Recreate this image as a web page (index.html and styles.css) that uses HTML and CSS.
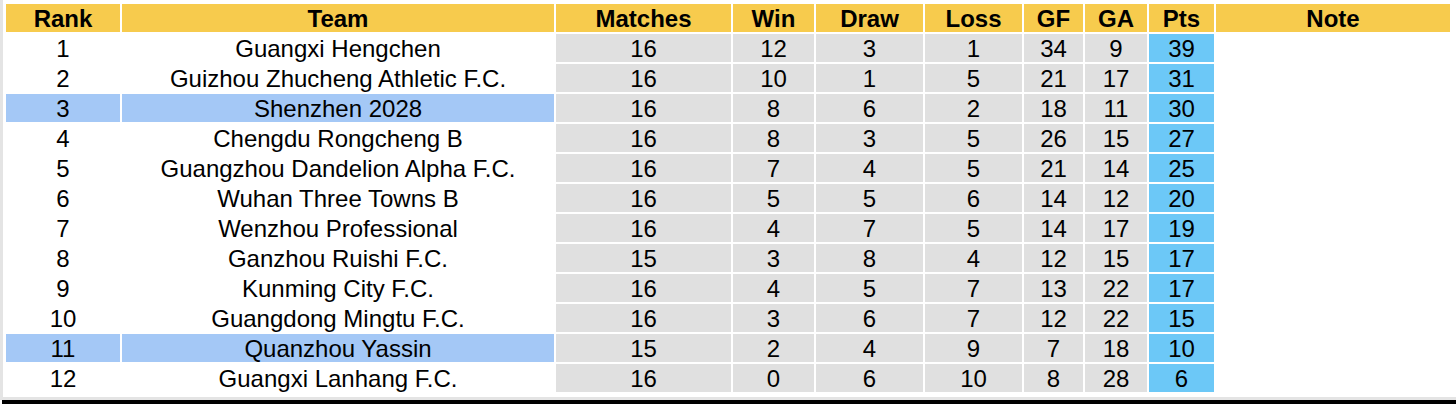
FILE: index.html
```html
<!DOCTYPE html>
<html>
<head>
<meta charset="utf-8">
<link rel="stylesheet" href="styles.css">
</head>
<body>
<div class="frame">
<table class="standings">
<thead>
<tr>
<th class="c-rank">Rank</th><th class="c-team">Team</th><th class="c-m">Matches</th><th class="c-w">Win</th><th class="c-d">Draw</th><th class="c-l">Loss</th><th class="c-gf">GF</th><th class="c-ga">GA</th><th class="c-pts">Pts</th><th class="c-note">Note</th>
</tr>
</thead>
<tbody>
<tr><td>1</td><td>Guangxi Hengchen</td><td class="g">16</td><td class="g">12</td><td class="g">3</td><td class="g">1</td><td class="g">34</td><td class="g">9</td><td class="p">39</td><td></td></tr>
<tr><td>2</td><td>Guizhou Zhucheng Athletic F.C.</td><td class="g">16</td><td class="g">10</td><td class="g">1</td><td class="g">5</td><td class="g">21</td><td class="g">17</td><td class="p">31</td><td></td></tr>
<tr class="hl"><td>3</td><td>Shenzhen 2028</td><td class="g">16</td><td class="g">8</td><td class="g">6</td><td class="g">2</td><td class="g">18</td><td class="g">11</td><td class="p">30</td><td></td></tr>
<tr><td>4</td><td>Chengdu Rongcheng B</td><td class="g">16</td><td class="g">8</td><td class="g">3</td><td class="g">5</td><td class="g">26</td><td class="g">15</td><td class="p">27</td><td></td></tr>
<tr><td>5</td><td>Guangzhou Dandelion Alpha F.C.</td><td class="g">16</td><td class="g">7</td><td class="g">4</td><td class="g">5</td><td class="g">21</td><td class="g">14</td><td class="p">25</td><td></td></tr>
<tr><td>6</td><td>Wuhan Three Towns B</td><td class="g">16</td><td class="g">5</td><td class="g">5</td><td class="g">6</td><td class="g">14</td><td class="g">12</td><td class="p">20</td><td></td></tr>
<tr><td>7</td><td>Wenzhou Professional</td><td class="g">16</td><td class="g">4</td><td class="g">7</td><td class="g">5</td><td class="g">14</td><td class="g">17</td><td class="p">19</td><td></td></tr>
<tr><td>8</td><td>Ganzhou Ruishi F.C.</td><td class="g">15</td><td class="g">3</td><td class="g">8</td><td class="g">4</td><td class="g">12</td><td class="g">15</td><td class="p">17</td><td></td></tr>
<tr><td>9</td><td>Kunming City F.C.</td><td class="g">16</td><td class="g">4</td><td class="g">5</td><td class="g">7</td><td class="g">13</td><td class="g">22</td><td class="p">17</td><td></td></tr>
<tr><td>10</td><td>Guangdong Mingtu F.C.</td><td class="g">16</td><td class="g">3</td><td class="g">6</td><td class="g">7</td><td class="g">12</td><td class="g">22</td><td class="p">15</td><td></td></tr>
<tr class="hl"><td>11</td><td>Quanzhou Yassin</td><td class="g">15</td><td class="g">2</td><td class="g">4</td><td class="g">9</td><td class="g">7</td><td class="g">18</td><td class="p">10</td><td></td></tr>
<tr><td>12</td><td>Guangxi Lanhang F.C.</td><td class="g">16</td><td class="g">0</td><td class="g">6</td><td class="g">10</td><td class="g">8</td><td class="g">28</td><td class="p">6</td><td></td></tr>
</tbody>
</table>
</div>
<div class="band"></div>
<div class="bar"></div>
</body>
</html>
```

FILE: styles.css
```css
html, body {
  margin: 0;
  padding: 0;
  background: #ffffff;
  font-family: "Liberation Sans", Arial, sans-serif;
  color: #000;
}

.frame {
  border-left: 3px solid #e4e4e4;
  padding: 2px 0 0 1px;
  height: 397px;
  box-sizing: border-box;
}

.standings {
  border-collapse: separate;
  border-spacing: 2px;
  table-layout: fixed;
  width: 1448px;
}

.standings th,
.standings td {
  height: 26px;
  padding: 2px 0 0 0;
  text-align: center;
  vertical-align: middle;
  font-size: 24px;
  line-height: 26px;
  white-space: nowrap;
  overflow: hidden;
}

.standings th {
  background: #f7cb4d;
  font-weight: bold;
}

.c-rank { width: 114px; }
.c-team { width: 432px; }
.c-m { width: 175px; }
.c-w { width: 81px; }
.c-d { width: 107px; }
.c-l { width: 97px; }
.c-gf { width: 59px; }
.c-ga { width: 62px; }
.c-pts { width: 65px; }
.c-note { width: 234px; }

.standings td.g { background: #e0e0e0; }
.standings td.p { background: #6cc8f7; }

.standings tr.hl td:nth-child(1),
.standings tr.hl td:nth-child(2) {
  background: #a4c8f6;
}

.band {
  height: 3px;
  background: #e4e4e4;
}

.bar {
  height: 4px;
  margin-left: 2px;
  background: #000;
}
```
